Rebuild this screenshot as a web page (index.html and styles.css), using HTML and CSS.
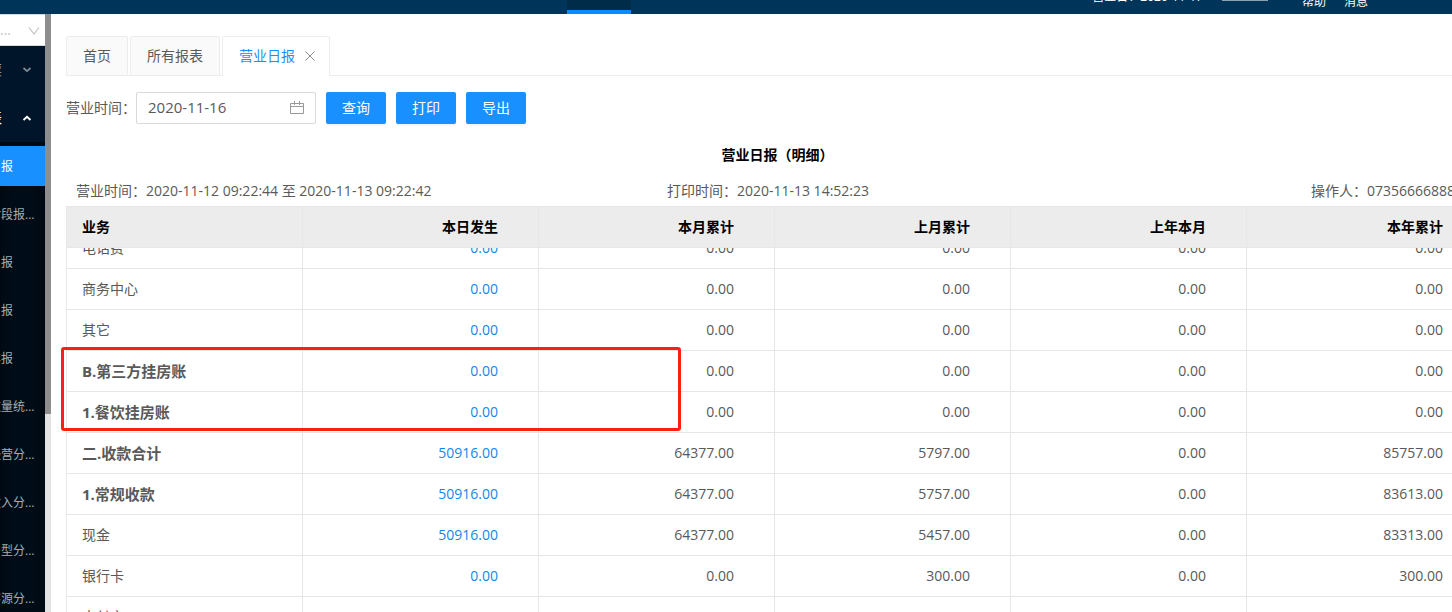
FILE: index.html
```html
<!DOCTYPE html>
<html lang="zh-CN">
<head>
<meta charset="utf-8">
<title>营业日报</title>
<link rel="stylesheet" href="styles.css">
</head>
<body>
<header class="topbar">
  <span class="topbar-active"></span>
  <div class="topbar-tools">
    <span class="biz-date">营业日：2020-11-17</span>
    <span class="topbar-line"></span>
    <a class="tool" href="#">帮助</a>
    <a class="tool" href="#">消息</a>
  </div>
</header>
<div class="layout">
  <aside class="sidebar">
    <div class="store">
      <select class="store-select" aria-label="门店"><option>...</option></select>
      <svg class="store-arrow" width="12" height="10" viewBox="0 0 12 10"><path d="M1 1.5 6 8l5-6.5" fill="none" stroke="#bfbfbf" stroke-width="1.1"/></svg>
    </div>
    <nav>
      <button class="group"><span>发票</span><svg width="10" height="6" viewBox="0 0 10 6"><path d="m1.5 1 3.5 3.2L8.500 1" fill="none" stroke="#7f8a94" stroke-width="1.7"/></svg></button>
      <button class="group open"><span>报表</span><svg width="10" height="6" viewBox="0 0 10 6"><path d="M1.500 5 5 1.800 8.500 5" fill="none" stroke="#fff" stroke-width="1.900"/></svg></button>
      <div class="submenu">
        <a class="item current" href="#">营业日报</a>
        <a class="item" href="#">营业时段报...</a>
        <a class="item" href="#">营业周报</a>
        <a class="item" href="#">营业月报</a>
        <a class="item" href="#">营业年报</a>
        <a class="item" href="#">客房数量统...</a>
        <a class="item" href="#">酒店经营分...</a>
        <a class="item" href="#">房费收入分...</a>
        <a class="item" href="#">客房房型分...</a>
        <a class="item" href="#">酒店客源分...</a>
      </div>
    </nav>
  </aside>
  <div class="scrollbar"><div class="thumb"></div></div>
  <main class="main">
    <div class="tabs">
      <button class="tab">首页</button>
      <button class="tab">所有报表</button>
      <button class="tab selected">营业日报<svg width="10" height="10" viewBox="0 0 10 10"><path d="m.5.5 9 9m0-9-9 9" stroke="#8c8c8c" stroke-width="1"/></svg></button>
    </div>
    <form class="filters">
      <label class="filter-label" for="date">营业时间：</label>
      <div class="date-field">
        <input class="date" id="date" type="text" value="2020-11-16">
        <svg width="14" height="14" viewBox="0 0 14 14" fill="none" stroke="#999" stroke-width="1"><path d="M.5 2.500h13v10H.500zM.5 5.500h13M4.500 0v4M9.500 0v4"/></svg>
      </div>
      <button class="btn" type="button">查询</button>
      <button class="btn" type="button">打印</button>
      <button class="btn" type="button">导出</button>
    </form>
    <section class="report">
      <h1 class="title">营业日报（明细）</h1>
      <div class="info">
        <span>营业时间：2020-11-12 09:22:44 至 2020-11-13 09:22:42</span>
        <span>打印时间：2020-11-13 14:52:23</span>
        <span>操作人：07356666888</span>
      </div>
      <table class="grid">
        <thead><tr><th>业务</th><th>本日发生</th><th>本月累计</th><th>上月累计</th><th>上年本月</th><th>本年累计</th></tr></thead>
      </table>
      <div class="grid-body">
        <table class="grid scrolled" aria-label="营业日报明细">
          <tbody>
            <tr><td>电话费</td><td><a href="#">0.00</a></td><td>0.00</td><td>0.00</td><td>0.00</td><td>0.00</td></tr>
            <tr><td>商务中心</td><td><a href="#">0.00</a></td><td>0.00</td><td>0.00</td><td>0.00</td><td>0.00</td></tr>
            <tr><td>其它</td><td><a href="#">0.00</a></td><td>0.00</td><td>0.00</td><td>0.00</td><td>0.00</td></tr>
            <tr class="sum"><td>B.第三方挂房账</td><td><a href="#">0.00</a></td><td>0.00</td><td>0.00</td><td>0.00</td><td>0.00</td></tr>
            <tr class="sum"><td>1.餐饮挂房账</td><td><a href="#">0.00</a></td><td>0.00</td><td>0.00</td><td>0.00</td><td>0.00</td></tr>
            <tr class="sum"><td>二.收款合计</td><td><a href="#">50916.00</a></td><td>64377.00</td><td>5797.00</td><td>0.00</td><td>85757.00</td></tr>
            <tr class="sum"><td>1.常规收款</td><td><a href="#">50916.00</a></td><td>64377.00</td><td>5757.00</td><td>0.00</td><td>83613.00</td></tr>
            <tr><td>现金</td><td><a href="#">50916.00</a></td><td>64377.00</td><td>5457.00</td><td>0.00</td><td>83313.00</td></tr>
            <tr><td>银行卡</td><td><a href="#">0.00</a></td><td>0.00</td><td>300.00</td><td>0.00</td><td>300.00</td></tr>
            <tr><td>支付宝</td><td><a href="#">0.00</a></td><td>0.00</td><td>0.00</td><td>0.00</td><td>0.00</td></tr>
          </tbody>
        </table>
      </div>
    </section>
    <div class="marker"></div>
  </main>
</div>
</body>
</html>
```
FILE: styles.css
```css
* { box-sizing: border-box; }
body {
  margin: 0;
  height: 100vh;
  overflow: hidden;
  display: flex;
  flex-direction: column;
  background: #fff;
  color: #595959;
  font: 14px/20px "Open Sans", "Noto Sans CJK SC", sans-serif;
}
button, input, select { font: inherit; color: inherit; }
a { text-decoration: none; color: #1585ee; }

.topbar {
  flex: none;
  height: 14px;
  overflow: hidden;
  position: relative;
  display: flex;
  justify-content: flex-end;
  background: #003459;
}
.topbar-active {
  position: absolute;
  left: 567px;
  top: 0;
  width: 64px;
  height: 14px;
  background: #002b49;
  border-bottom: 4px solid #0a8cff;
}
.topbar-tools {
  display: flex;
  align-items: flex-end;
  padding-right: 84px;
  color: #fff;
  font-size: 12px;
  line-height: 16px;
}
.biz-date { margin: 0 19px 9px 0; }
.topbar-line { width: 46px; height: 1px; margin: 0 34px 13px 0; background: #8ba1b1; }
.tool { color: #fff; margin-bottom: 4px; }
.tool + .tool { margin-left: 18px; }

.layout { flex: 1; min-height: 0; display: flex; }
.sidebar { flex: none; width: 45px; overflow: hidden; background: #000c17; }
.store { position: relative; height: 32px; background: #fff; border: 1px solid #d9d9d9; border-width: 1px 0; }
.store-select {
  display: block;
  width: 45px;
  height: 30px;
  padding: 0;
  border: 0;
  appearance: none;
  background: transparent;
  color: #bfbfbf;
}
.store-arrow { position: absolute; right: 5px; top: 11px; pointer-events: none; }
.group {
  display: flex;
  align-items: center;
  justify-content: flex-end;
  gap: 20px;
  width: 80px;
  height: 48px;
  margin-left: -35px;
  padding: 0 13px 0 0;
  border: 0;
  background: #001529;
  color: #a6adb4;
  white-space: nowrap;
}
.group.open { color: #fff; }
.submenu {
  display: flex;
  flex-direction: column;
  gap: 8px;
  padding-top: 4px;
  box-shadow: inset 0 2px 8px rgba(0, 0, 0, .45);
}
.item {
  height: 40px;
  padding-left: 35px;
  margin-left: -70px;
  font-size: 12px;
  line-height: 42px;
  white-space: nowrap;
  color: #a6acb1;
}
.item.current { color: #fff; background: #1890ff; }
.scrollbar { flex: none; width: 6px; background: #e3e3e3; }
.thumb { height: 400px; background: #8f8d8d; }

.main { flex: 1; min-width: 0; position: relative; overflow: hidden; padding: 22px 0 0 15px; }
.tabs { display: flex; gap: 2px; height: 40px; border-bottom: 1px solid #ececec; }
.tab {
  display: flex;
  align-items: center;
  gap: 10px;
  height: 40px;
  padding: 0 16px;
  border: 1px solid #ececec;
  border-radius: 2px 2px 0 0;
  background: #fafafa;
}
.tab.selected { padding-right: 14px; background: #fff; color: #1890ff; border-bottom-color: #fff; }

.filters { display: flex; align-items: center; gap: 10px; margin-top: 16px; }
.filter-label { width: 60px; white-space: nowrap; }
.date-field {
  display: flex;
  align-items: center;
  width: 180px;
  height: 32px;
  padding: 0 11px;
  border: 1px solid #d9d9d9;
  border-radius: 2px;
}
.date { flex: 1; min-width: 0; padding: 0 0 2px; border: 0; outline: 0; background: none; font-size: 15px; }
.btn {
  height: 32px;
  padding: 0 16px;
  border: 0;
  border-radius: 2px;
  background: #1890ff;
  color: #fff;
  box-shadow: 0 2px 0 rgba(0, 0, 0, .04);
}

.report { width: calc(100% + 31px); }
.title { margin: 21px 0 0; padding-left: 6px; text-align: center; font-size: 14px; line-height: 20px; color: #000; }
.info { display: grid; grid-template-columns: 42% 1fr 172px; padding: 16px 0 5px 10px; white-space: nowrap; }
.grid {
  width: 100%;
  table-layout: fixed;
  border-collapse: separate;
  border-spacing: 0;
  border-left: 1px solid #e8e8e8;
}
.grid th, .grid td {
  height: 41px;
  padding: 0 40px 0 15px;
  border: 1px solid #e6e6e6;
  border-width: 0 1px 1px 0;
  text-align: right;
}
.grid th { height: 42px; border-top-width: 1px; background: #ececec; color: #000; }
.grid th:first-child, .grid td:first-child { text-align: left; }
.grid th:last-child, .grid td:last-child { padding-right: 39px; }
.grid-body { overflow: hidden; }
.scrolled { margin-top: -20px; }
.sum td:first-child { font-size: 15px; font-weight: bold; }

.marker {
  position: absolute;
  left: 10px;
  top: 333px;
  width: 620px;
  height: 84px;
  border: 3px solid #ff1e14;
  border-radius: 3px;
  pointer-events: none;
}
```
